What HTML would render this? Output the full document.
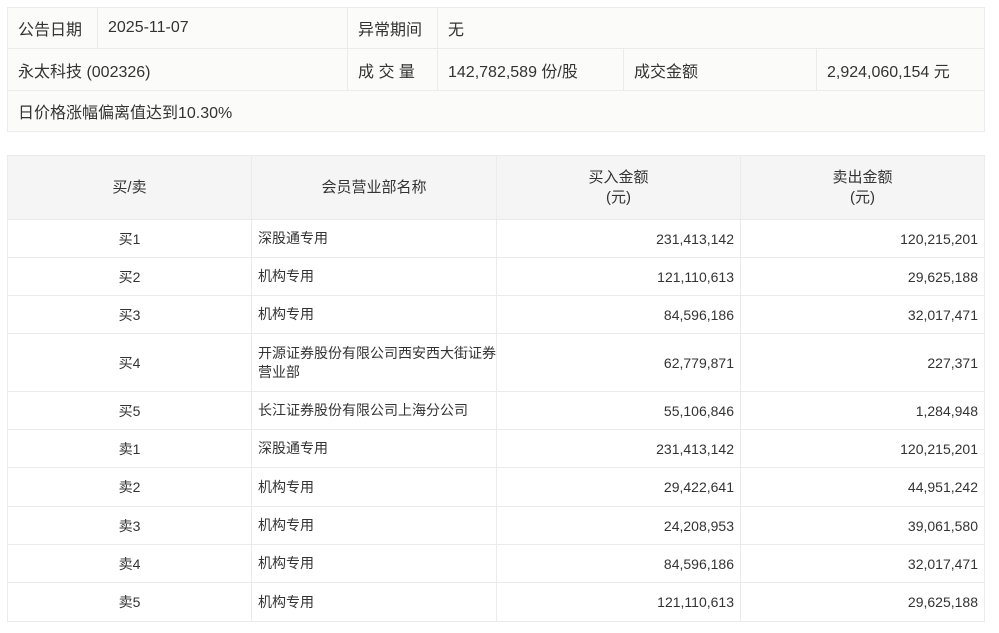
<!DOCTYPE html><html><head><meta charset="utf-8"><style>
*{margin:0;padding:0;box-sizing:border-box}
body{width:999px;height:633px;background:#fff;font-family:"Liberation Sans","Noto Sans CJK SC",sans-serif;color:#333;position:relative;overflow:hidden}
.c{position:absolute;border:1px solid #ebebeb;display:flex;align-items:center;white-space:nowrap}
.t{background:#fbfbfa;font-size:16px;padding-left:10px}
.h{background:#f5f5f5;font-size:15px;justify-content:center;text-align:center;line-height:20px}
.b{font-size:14px}
.m{justify-content:center}
.l{padding-left:6px;white-space:normal;line-height:19px}
.r{justify-content:flex-end;padding-right:6px}
</style></head><body>
<div class="c t" style="left:7px;top:7px;width:91px;height:42px">公告日期</div>
<div class="c t" style="left:97px;top:7px;width:251px;height:42px">2025-11-07</div>
<div class="c t" style="left:347px;top:7px;width:91px;height:42px">异常期间</div>
<div class="c t" style="left:437px;top:7px;width:548px;height:42px">无</div>
<div class="c t" style="left:7px;top:48px;width:341px;height:43px">永太科技 (002326)</div>
<div class="c t" style="left:347px;top:48px;width:91px;height:43px">成 交 量</div>
<div class="c t" style="left:437px;top:48px;width:187px;height:43px">142,782,589 份/股</div>
<div class="c t" style="left:623px;top:48px;width:194px;height:43px">成交金额</div>
<div class="c t" style="left:816px;top:48px;width:169px;height:43px">2,924,060,154 元</div>
<div class="c t" style="left:7px;top:90px;width:978px;height:42px">日价格涨幅偏离值达到10.30%</div>

<div class="c h" style="left:7px;top:155px;width:245px;height:65px">买/卖</div>
<div class="c h" style="left:251px;top:155px;width:246px;height:65px">会员营业部名称</div>
<div class="c h" style="left:496px;top:155px;width:245px;height:65px">买入金额<br>(元)</div>
<div class="c h" style="left:740px;top:155px;width:245px;height:65px">卖出金额<br>(元)</div>
<div id="rows"></div>
<script>
var d=[["买1","深股通专用","231,413,142","120,215,201"],["买2","机构专用","121,110,613","29,625,188"],["买3","机构专用","84,596,186","32,017,471"],["买4","开源证券股份有限公司西安西大街证券<br>营业部","62,779,871","227,371"],["买5","长江证券股份有限公司上海分公司","55,106,846","1,284,948"],["卖1","深股通专用","231,413,142","120,215,201"],["卖2","机构专用","29,422,641","44,951,242"],["卖3","机构专用","24,208,953","39,061,580"],["卖4","机构专用","84,596,186","32,017,471"],["卖5","机构专用","121,110,613","29,625,188"]];
var ys=[219,257,295,333,391,429,467,506,544,582,621],h="";
d.forEach(function(r,i){var y=ys[i],hh=ys[i+1]-y+1;
h+='<div class="c b m" style="left:7px;top:'+y+'px;width:245px;height:'+hh+'px">'+r[0]+'</div>';
h+='<div class="c b l" style="left:251px;top:'+y+'px;width:246px;height:'+hh+'px"><span style="white-space:nowrap">'+r[1]+'</span></div>';
h+='<div class="c b r" style="left:496px;top:'+y+'px;width:245px;height:'+hh+'px">'+r[2]+'</div>';
h+='<div class="c b r" style="left:740px;top:'+y+'px;width:245px;height:'+hh+'px">'+r[3]+'</div>';});
document.getElementById("rows").innerHTML=h;
</script>
</body></html>
